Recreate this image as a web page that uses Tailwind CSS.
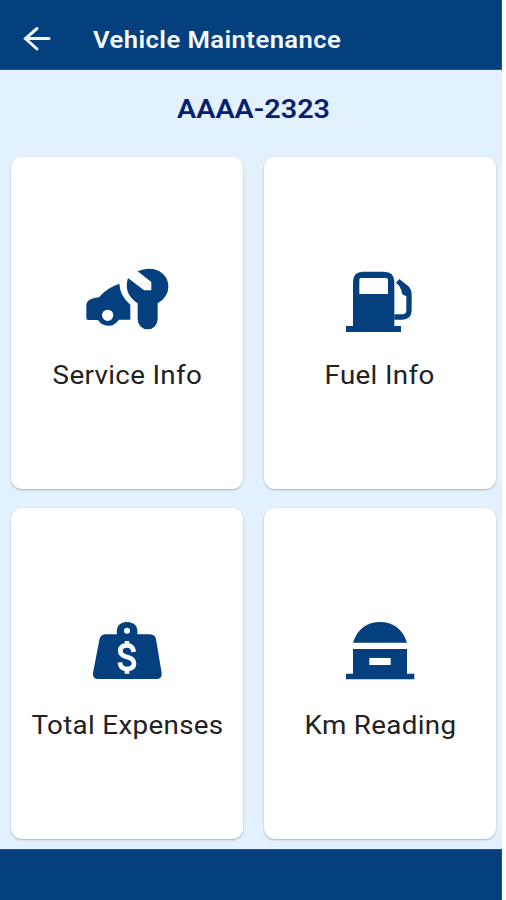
<!DOCTYPE html>
<html lang="en">
<head>
<meta charset="utf-8">
<title>Vehicle Maintenance</title>
<script src="https://cdn.jsdelivr.net/npm/@tailwindcss/browser@4"></script>
</head>
<body class="w-[506px] h-[900px] overflow-hidden bg-white font-['Roboto',sans-serif]">
<div class="w-[502px] h-[900px] flex flex-col bg-[#e2f1fd]">
  <header class="h-[70px] shrink-0 bg-[#043f7e] border-r border-b border-[#2c4f8b] flex items-center pt-2 pl-[22px]">
    <svg class="w-[30px] h-[26px] shrink-0" viewBox="0 0 30 26" fill="none" stroke="#f2f7ff" stroke-width="3" stroke-linecap="round"><path d="M27 12.5H3.5M15 2.5L3.5 12.5 15 23"/></svg>
    <h1 class="ml-[41px] mt-1 origin-left scale-x-[1.113] text-[23px] tracking-[0.4px] font-semibold text-[#f6faff] whitespace-nowrap leading-7">Vehicle Maintenance</h1>
  </header>
  <h2 class="h-[87px] shrink-0 pt-[24px] text-center text-[25px] leading-8 font-semibold text-[#06206f]"><span class="inline-block scale-x-[1.15] ml-[6px]">AAAA-2323</span></h2>
  <main class="grid grid-cols-[232px_232px] grid-rows-[332px_331px] gap-x-[21px] gap-y-[19px] pl-[11px] h-[692px] shrink-0 text-[25px] tracking-[0.3px] leading-8 text-[#222]">
    <section class="bg-white rounded-[11px] shadow-[0_1px_2px_#9fb3c3] flex flex-col items-center pt-[103px]">
      <svg class="w-[105px] h-[75px]" viewBox="0 0 315 225" fill="#043f7e"><path fill-rule="evenodd" d="M40 180q-6 0-6-6v-37q0-16 17-21 10-3 21-4Q94 84 133 71q2 37 33 63v45h-35q-10 18-31 18T69 180zM98 149a17 17 0 1 0 0 34 17 17 0 0 0 0-34z"/><path d="M188 34C232 13 281 36 280 80q0 30-32 50v48a30 30 0 0 1-60 0v-48Q144 101 159 54l48 37h22V66z"/></svg>
      <span class="mt-[25px] scale-x-[1.11] whitespace-nowrap">Service Info</span>
    </section>
    <section class="bg-white rounded-[11px] shadow-[0_1px_2px_#9fb3c3] flex flex-col items-center pt-[103px]">
      <svg class="w-[90px] h-[75px]" viewBox="0 0 270 225" fill="#043f7e"><path fill-rule="evenodd" d="M33 198h21V65q0-30 30-30h63q31 0 31 30v133h20v18H33zM78 54q-5 0-5 5v43h86V59q0-5-5-5z"/><path d="M188 63l29 24q5 6 5 18v46q0 20-20 20h-24" fill="none" stroke="#043f7e" stroke-width="16"/><path d="M193 78l24-2v33q-19-3-17-16z"/></svg>
      <span class="mt-[25px] scale-x-[1.11] whitespace-nowrap">Fuel Info</span>
    </section>
    <section class="bg-white rounded-[11px] shadow-[0_1px_2px_#9fb3c3] flex flex-col items-center pt-[107px]">
      <svg class="w-[95px] h-[75px]" viewBox="0 0 285 225" fill="#043f7e"><path fill-rule="evenodd" d="M111 58Q106 22 141 21q35 1 31 37h38q15 1 18 14l17 102q2 18-16 18H55q-18 0-16-18L58 75q3-16 18-17zM141 38a9 9 0 1 0 0 18 9 9 0 0 0 0-18z"/><path d="M161 111q-2-20-20-20-20 0-20 17 0 13 20 18 21 5 21 19 0 17-21 17-20 0-21-20M141 78v15m0 68v15" fill="none" stroke="#fff" stroke-width="14"/></svg>
      <span class="mt-[20px] scale-x-[1.11] whitespace-nowrap">Total Expenses</span>
    </section>
    <section class="bg-white rounded-[11px] shadow-[0_1px_2px_#9fb3c3] flex flex-col items-center pt-[107px]">
      <svg class="w-[90px] h-[75px]" viewBox="0 0 270 225" fill="#043f7e"><path d="M54 83C66 43 96 21 135 21s69 22 81 62z"/><path fill-rule="evenodd" d="M54 102h162v74h22v17H33v-17h21zM103 129v21h64v-21z"/></svg>
      <span class="mt-[20px] scale-x-[1.11] whitespace-nowrap">Km Reading</span>
    </section>
  </main>
  <footer class="flex-1 bg-[#043f7e] border-t border-r border-[#2c4f8b]"></footer>
</div>
</body>
</html>
